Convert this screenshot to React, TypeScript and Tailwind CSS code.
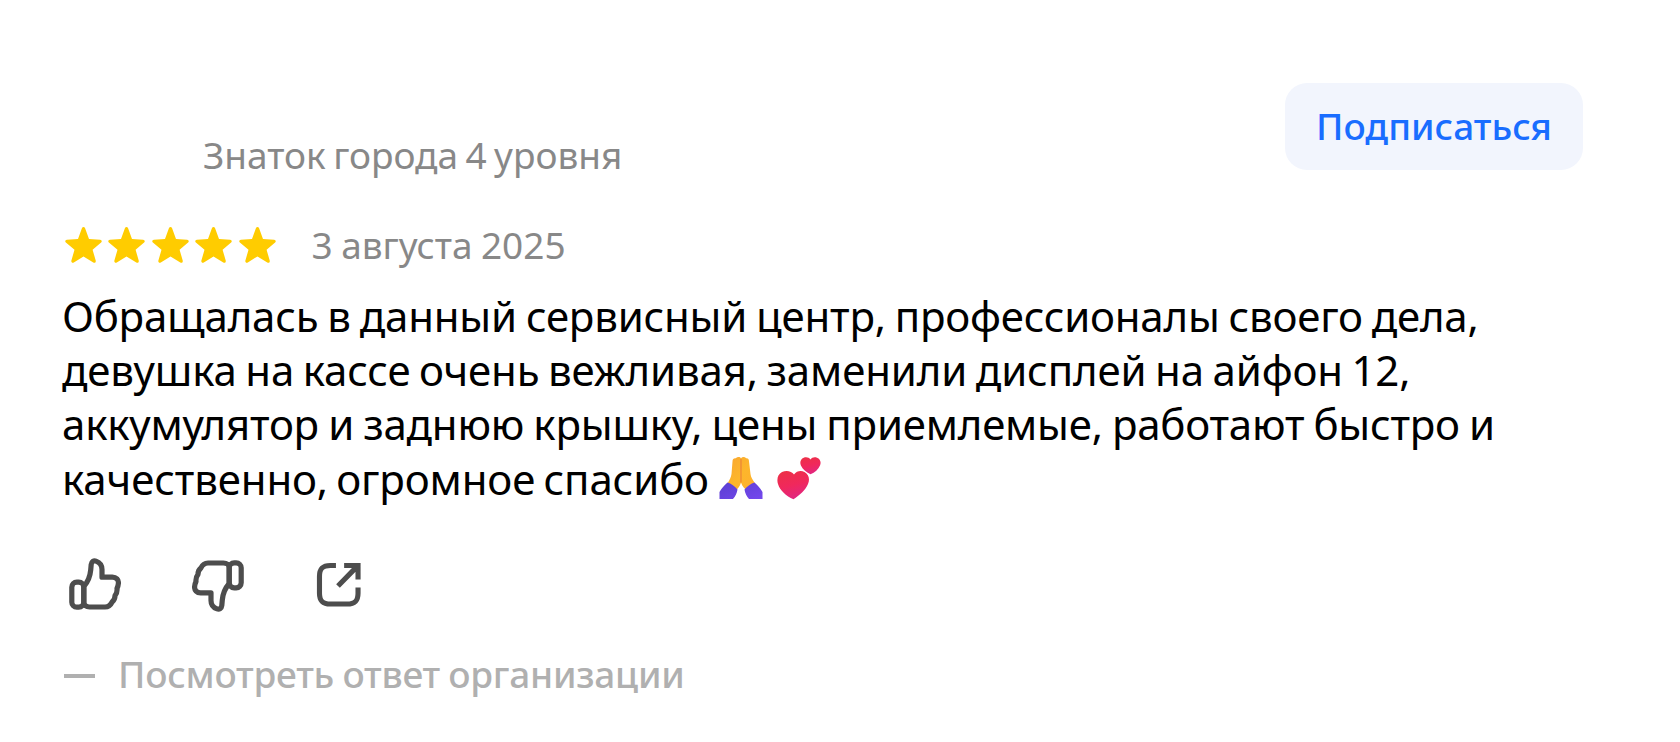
const reviewLines = [
  { text: "Обращалась в данный сервисный центр, профессионалы своего дела,", spacing: "tracking-[-0.22px] [word-spacing:-1.7px]" },
  { text: "девушка на кассе очень вежливая, заменили дисплей на айфон 12,", spacing: "tracking-[-0.14px] [word-spacing:-2.2px]" },
  { text: "аккумулятор и заднюю крышку, цены приемлемые, работают быстро и", spacing: "tracking-[-0.22px] [word-spacing:-1.5px]" },
];

const Star = () => (
  <svg className="h-9 w-[37px]" viewBox="0 0 37 36" fill="#ffcc00">
    <path d="M16.900 1.300c.6-1.600 2.600-1.600 3.200 0l3.900 10.700 11.100.7c1.600.1 2.200 1.900 1 2.900l-8.500 7.100 3.100 10.900c.4 1.600-1 2.700-2.400 1.800L18.500 29.400l-9.700 6c-1.400.9-2.900-.2-2.400-1.800l3.100-10.900L.9 15.600c-1.200-1-.6-2.800 1-2.900l11.100-.7z" />
  </svg>
);

const ThumbIcon = () => (
  <svg className="size-[52px]" viewBox="0 0 52 52" fill="none" stroke="#4d4d4d" strokeWidth="5.2" strokeLinejoin="round">
    <rect x="2.800" y="24.200" width="12" height="25" rx="5" />
    <path d="M14.800 28.500c4-4.500 6.300-9.800 6.900-16.500l.5-5.500c.3-2.700 2.500-4.200 4.800-3.400 3.600 1.300 6 4.400 6 8.400v7.700h10.400c3.800 0 6.300 2.600 6 6.100-.2 2.400-.4 3.200-1.400 5.200.3 3-.2 5-2 7.200 0 2.800-.8 4.600-2.800 6.200-1.600 3.400-3.800 5.100-7.200 5.100H20.600c-3.300 0-5.800-1.600-5.800-5z" />
  </svg>
);

const ShareIcon = () => (
  <svg className="size-[45px]" viewBox="0 0 44 44" fill="none" stroke="#4d4d4d" strokeWidth="5">
    <path d="M19.500 3.400H14C6.500 3.400 3.400 6.500 3.400 14v16.500c0 7.500 3.100 10.600 10.600 10.600h16.500c7.500 0 10.600-3.100 10.600-10.600V25" />
    <path d="M27.500 3.400h13.600v13.600M40.500 4 21.500 23.500" />
  </svg>
);

const PrayingHands = () => (
  <svg className="h-11 w-11" viewBox="0 0 44 44">
    <defs>
      <linearGradient id="hands" x1="0" y1="0" x2="1" y2="1">
        <stop offset="0" stopColor="#f9a62f" />
        <stop offset="0.5" stopColor="#fdb62b" />
        <stop offset="1" stopColor="#ffb02e" />
      </linearGradient>
      <linearGradient id="sleeve" x1="0" y1="0" x2="1" y2="1">
        <stop offset="0" stopColor="#5b3fd0" />
        <stop offset="1" stopColor="#7448ee" />
      </linearGradient>
    </defs>
    <path
      fill="url(#hands)"
      d="M13.500 5.500c0-2.500 1.500-3.500 3.200-3.200C18.500.700 21 .700 22 2.300c1.200-1.600 3.700-1.600 5.200 0 1.800-.2 2.800.8 2.800 3.200l1.500 12.500c.3 3.500 2.500 6 4.500 9.500L28.500 35c-3-2-5.500-5-6.500-8.500-1 3.500-3 6.500-6 8.500L8.500 27.500c2-3.500 3.500-6 4-9.500z"
    />
    <path d="M22 3v23.500" stroke="#ee8b35" strokeWidth="1.400" />
    <path
      fill="url(#sleeve)"
      d="M8.500 26.500c3.500 1 7.500 4 10 7-.6 4-2.200 7-4.500 9.500H.5v-7c2.300-4 4.500-6.500 8-9.500zM35.500 26.500c-3.500 1-7.500 4-10 7 .6 4 2.200 7 4.500 9.500h13.500v-7c-2.300-4-4.500-6.500-8-9.500z"
    />
  </svg>
);

const TwoHearts = () => (
  <svg className="h-11 w-11" viewBox="0 0 44 44">
    <defs>
      <linearGradient id="heart" x1="0.3" y1="0" x2="0.6" y2="1">
        <stop offset="0" stopColor="#ed3048" />
        <stop offset="0.5" stopColor="#f0285c" />
        <stop offset="1" stopColor="#e02683" />
      </linearGradient>
    </defs>
    <path
      fill="url(#heart)"
      d="M17 18.500c2.500-3.500 7-4.300 10.500-2.500 4.500 2.300 5.500 7.500 3.500 12-2.500 6-8.500 11.500-14.500 15.200C9 40 3 34.500 1 28c-1.600-5 0-10 4-12 4.500-2 9.500-1 12 2.500z"
    />
    <path
      fill="url(#heart)"
      d="M33.500 3.500c1.500-2.200 4-2.800 6.500-1.800 3.300 1.300 4.400 4.500 3 7.800-1.700 4-5 6.800-9.500 8.800-4.500-2.200-7.800-4.800-9.600-8.800-1.400-3.300-.2-6.500 2.800-7.800 2.500-1 5.300-.4 6.800 1.800z"
    />
  </svg>
);

const App = () => {
  return (
    <div className="flex h-[742px] w-[1680px] flex-col overflow-hidden bg-white pl-[62px] font-['Noto_Sans',sans-serif] whitespace-nowrap">
      <div className="mt-[83px] flex h-[87px] items-start justify-between pr-[97px]">
        <div className="mt-[47px] ml-[141px] text-[37px] leading-[50px] [word-spacing:-2.2px] text-[#888888]">
          Знаток города 4 уровня
        </div>
        <button className="flex h-[87px] w-[298px] items-center justify-center rounded-[22px] bg-[#f2f5fd] pb-[2px] text-[37px] font-medium text-[#196dff]">
          Подписаться
        </button>
      </div>

      <div className="mt-[50px] flex h-[50px] items-center">
        <div className="flex gap-[6.400px] pl-[3px]">
          {[1, 2, 3, 4, 5].map((n) => (
            <Star key={n} />
          ))}
        </div>
        <span className="ml-[36px] text-[37px] [word-spacing:-1.2px] text-[#888888]">3 августа 2025</span>
      </div>

      <div className="mt-[18.500px] text-[42px] leading-[54.400px] text-black">
        {reviewLines.map((line) => (
          <p key={line.text} className={line.spacing}>
            {line.text}
          </p>
        ))}
        <div className="flex">
          <p className="tracking-[-0.13px] [word-spacing:-2.5px]">качественно, огромное спасибо</p>
          <div className="mt-1 ml-[10px] flex gap-[14px]">
            <PrayingHands />
            <TwoHearts />
          </div>
        </div>
      </div>

      <div className="mt-[50.500px] ml-[7px] flex">
        <button>
          <ThumbIcon />
        </button>
        <button className="mt-[3px] ml-[71px] rotate-180">
          <ThumbIcon />
        </button>
        <button className="mt-[5px] ml-[72px] flex items-start">
          <ShareIcon />
        </button>
      </div>

      <div className="mt-[37px] flex items-center text-[37px] leading-[50px] font-medium text-[#b0b0b0]">
        <span className="mt-[4px] ml-[2px] h-[4px] w-[31px] bg-[#b0b0b0]" />
        <span className="ml-[23px] tracking-[-0.25px] [word-spacing:-1px]">Посмотреть ответ организации</span>
      </div>
    </div>
  );
};

export default App;
